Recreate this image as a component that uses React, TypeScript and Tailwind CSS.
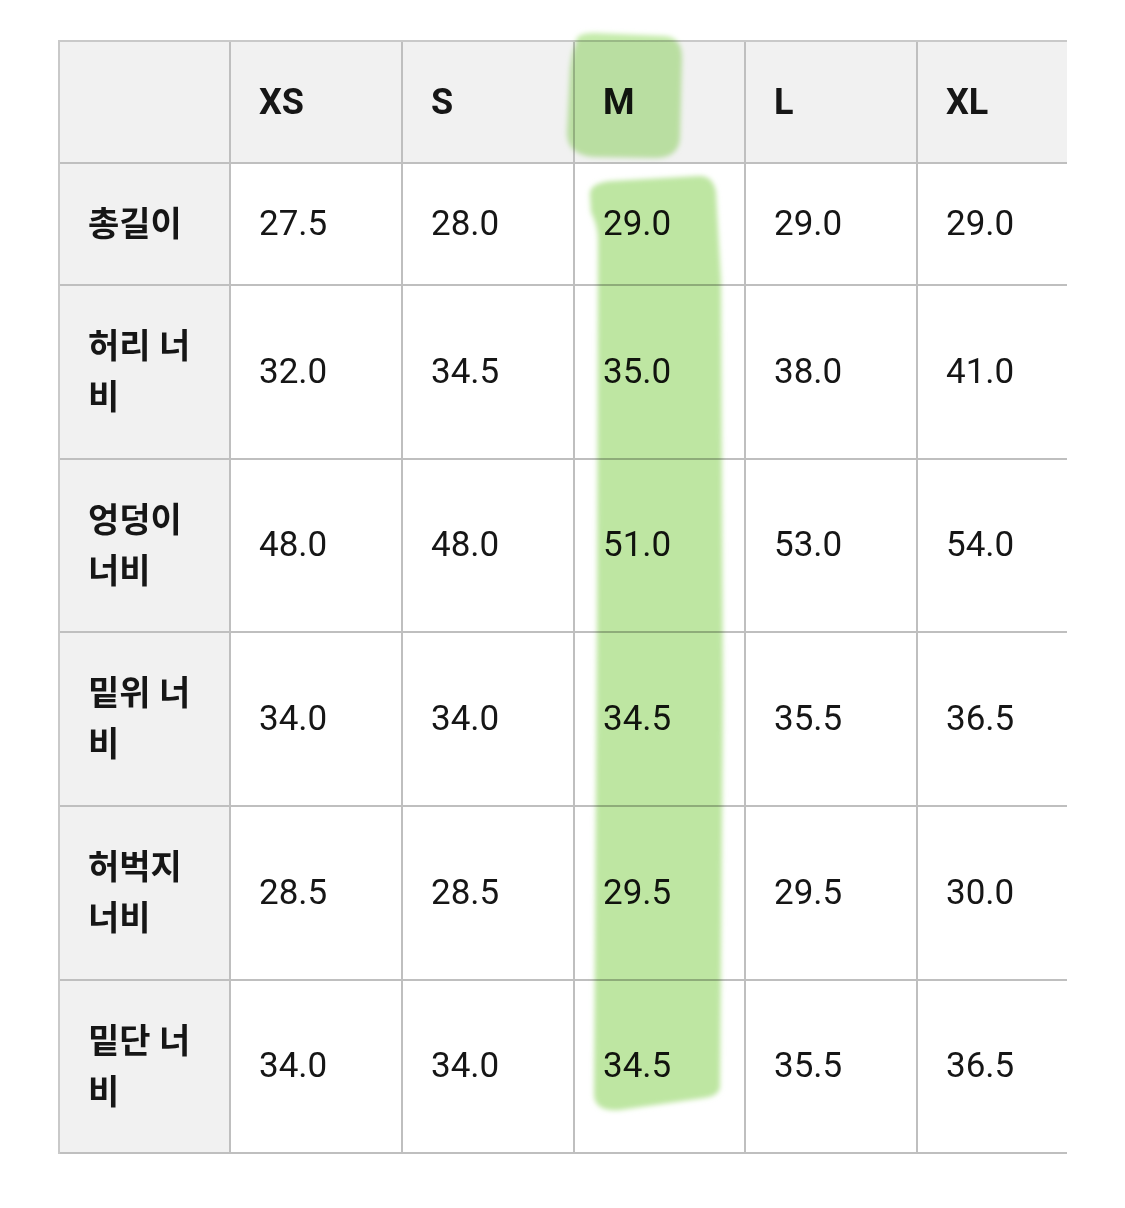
import React from "react";

const sizes = ["XS", "S", "M", "L", "XL"];
const rows: { label: string; values: string[]; h: string }[] = [
  { label: "총길이", values: ["27.5", "28.0", "29.0", "29.0", "29.0"], h: "h-[122px]" },
  { label: "허리 너비", values: ["32.0", "34.5", "35.0", "38.0", "41.0"], h: "h-[174px]" },
  { label: "엉덩이 너비", values: ["48.0", "48.0", "51.0", "53.0", "54.0"], h: "h-[173px]" },
  { label: "밑위 너비", values: ["34.0", "34.0", "34.5", "35.5", "36.5"], h: "h-[174px]" },
  { label: "허벅지 너비", values: ["28.5", "28.5", "29.5", "29.5", "30.0"], h: "h-[174px]" },
  { label: "밑단 너비", values: ["34.0", "34.0", "34.5", "35.5", "36.5"], h: "h-[173px]" },
];

const font = { fontFamily: 'Roboto, "Noto Sans CJK KR", sans-serif' };

export default function App() {
  return (
    <div className="relative w-[1125px] h-[1208px] bg-white text-[#161616]" style={font}>
      <div className="pt-[40px] pl-[58px]">
        <div className="w-[1009px] overflow-hidden">
          <div className="grid grid-cols-[171px_172px_172px_171px_172px_172px] w-[1032px] border-l-2 border-t-2 border-[#c9c9c9]">
            <div className="h-[122px] bg-[#f1f1f1] border-r-2 border-b-2 border-[#bfbfbf]" />
            {sizes.map((s) => (
              <div
                key={s}
                className="h-[122px] bg-[#f1f1f1] border-r-2 border-b-2 border-[#bfbfbf] flex items-center pl-[28px] text-[36px] font-bold"
              >
                {s}
              </div>
            ))}
            {rows.map((r) => (
              <React.Fragment key={r.label}>
                <div
                  className={`${r.h} bg-[#f1f1f1] border-r-2 border-b-2 border-[#bfbfbf] flex items-center pl-[28px] pr-[26px] text-[34px] font-bold leading-[51px]`}
                >
                  <span>{r.label}</span>
                </div>
                {r.values.map((v, i) => (
                  <div
                    key={i}
                    className={`${r.h} bg-white border-r-2 border-b-2 border-[#bfbfbf] flex items-center pl-[28px] text-[35px]`}
                  >
                    {v}
                  </div>
                ))}
              </React.Fragment>
            ))}
          </div>
        </div>
      </div>
      <svg
        className="absolute inset-0 pointer-events-none mix-blend-multiply"
        width="1125"
        height="1208"
        viewBox="0 0 1125 1208"
      >
        <defs>
          <filter id="soft" x="-10%" y="-10%" width="120%" height="120%">
            <feGaussianBlur stdDeviation="2.4" />
          </filter>
        </defs>
        <g filter="url(#soft)">
          <path
            fill="#c4ebaa"
            d="M576,44 Q574,33 594,33 L664,36 Q682,37 682,58 L680,138 Q679,157 656,158 L596,157 Q568,156 567,134 L570,70 Q572,50 576,44 Z"
          />
          <path
            fill="#bee6a2"
            d="M590,196 Q588,183 612,181 L698,176 Q713,175 716,192 L721,280 L723,700 L720,1088 Q718,1096 704,1098 L620,1110 Q594,1112 594,1094 L597,620 L598,240 Q598,226 591,212 Z"
          />
        </g>
      </svg>
    </div>
  );
}
